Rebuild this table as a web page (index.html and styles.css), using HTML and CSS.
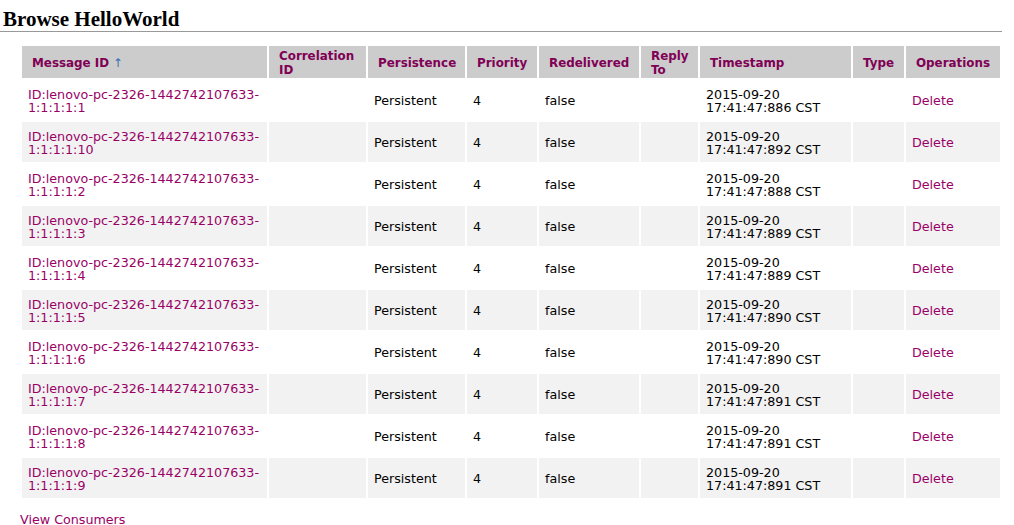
FILE: index.html
```html
<!DOCTYPE html>
<html>
<head>
<meta charset="utf-8">
<title>Browse HelloWorld</title>
<link rel="stylesheet" href="styles.css">
</head>
<body>
<div class="page">
  <h1 class="title">Browse HelloWorld</h1>
  <table class="messages">
    <thead>
      <tr>
        <th class="c-id">Message ID <span class="sort">↑</span></th>
        <th class="c-corr">Correlation ID</th>
        <th class="c-pers">Persistence</th>
        <th class="c-prio">Priority</th>
        <th class="c-redel">Redelivered</th>
        <th class="c-reply">Reply To</th>
        <th class="c-ts">Timestamp</th>
        <th class="c-type">Type</th>
        <th class="c-ops">Operations</th>
      </tr>
    </thead>
    <tbody>
      <tr><td><a href="#">ID:lenovo-pc-2326-1442742107633-1:1:1:1:1</a></td><td></td><td>Persistent</td><td>4</td><td>false</td><td></td><td>2015-09-20 17:41:47:886 CST</td><td></td><td><a href="#">Delete</a></td></tr>
      <tr><td><a href="#">ID:lenovo-pc-2326-1442742107633-1:1:1:1:10</a></td><td></td><td>Persistent</td><td>4</td><td>false</td><td></td><td>2015-09-20 17:41:47:892 CST</td><td></td><td><a href="#">Delete</a></td></tr>
      <tr><td><a href="#">ID:lenovo-pc-2326-1442742107633-1:1:1:1:2</a></td><td></td><td>Persistent</td><td>4</td><td>false</td><td></td><td>2015-09-20 17:41:47:888 CST</td><td></td><td><a href="#">Delete</a></td></tr>
      <tr><td><a href="#">ID:lenovo-pc-2326-1442742107633-1:1:1:1:3</a></td><td></td><td>Persistent</td><td>4</td><td>false</td><td></td><td>2015-09-20 17:41:47:889 CST</td><td></td><td><a href="#">Delete</a></td></tr>
      <tr><td><a href="#">ID:lenovo-pc-2326-1442742107633-1:1:1:1:4</a></td><td></td><td>Persistent</td><td>4</td><td>false</td><td></td><td>2015-09-20 17:41:47:889 CST</td><td></td><td><a href="#">Delete</a></td></tr>
      <tr><td><a href="#">ID:lenovo-pc-2326-1442742107633-1:1:1:1:5</a></td><td></td><td>Persistent</td><td>4</td><td>false</td><td></td><td>2015-09-20 17:41:47:890 CST</td><td></td><td><a href="#">Delete</a></td></tr>
      <tr><td><a href="#">ID:lenovo-pc-2326-1442742107633-1:1:1:1:6</a></td><td></td><td>Persistent</td><td>4</td><td>false</td><td></td><td>2015-09-20 17:41:47:890 CST</td><td></td><td><a href="#">Delete</a></td></tr>
      <tr><td><a href="#">ID:lenovo-pc-2326-1442742107633-1:1:1:1:7</a></td><td></td><td>Persistent</td><td>4</td><td>false</td><td></td><td>2015-09-20 17:41:47:891 CST</td><td></td><td><a href="#">Delete</a></td></tr>
      <tr><td><a href="#">ID:lenovo-pc-2326-1442742107633-1:1:1:1:8</a></td><td></td><td>Persistent</td><td>4</td><td>false</td><td></td><td>2015-09-20 17:41:47:891 CST</td><td></td><td><a href="#">Delete</a></td></tr>
      <tr><td><a href="#">ID:lenovo-pc-2326-1442742107633-1:1:1:1:9</a></td><td></td><td>Persistent</td><td>4</td><td>false</td><td></td><td>2015-09-20 17:41:47:891 CST</td><td></td><td><a href="#">Delete</a></td></tr>
    </tbody>
  </table>
  <div class="footer-links"><a href="#">View Consumers</a></div>
</div>
</body>
</html>
```
FILE: styles.css
```css
html, body {
  margin: 0;
  padding: 0;
  background: #ffffff;
}

.page {
  width: 1002px;
  font-family: "DejaVu Sans", Verdana, sans-serif;
  font-size: 12.7px;
  color: #000000;
}

a {
  color: #990066;
  text-decoration: none;
}

.title {
  margin: 0;
  padding: 7px 0 0 3px;
  font-family: "Liberation Serif", "Times New Roman", serif;
  font-size: 21px;
  font-weight: bold;
  line-height: normal;
  height: 24px;
  border-bottom: 1px solid #999999;
  color: #000000;
}

.messages {
  margin: 12px 0 0 20px;
  width: 982px;
  table-layout: fixed;
  border-collapse: separate;
  border-spacing: 2px;
}

.messages th {
  box-sizing: border-box;
  height: 32px;
  padding: 3px 4px 1px 10px;
  background: #cccccc;
  color: #800055;
  font-size: 11.9px;
  font-weight: bold;
  line-height: 14px;
  text-align: left;
  vertical-align: middle;
}

.sort {
  color: #3a72b0;
  font-weight: normal;
}

.c-id { width: 245px; }
.c-corr { width: 97px; }
.c-pers { width: 97px; }
.c-prio { width: 70px; }
.c-redel { width: 100px; }
.c-reply { width: 57px; }
.c-ts { width: 151px; }
.c-type { width: 51px; }
.c-ops { width: 94px; }

.messages td {
  box-sizing: border-box;
  height: 40px;
  padding: 2px 3px 0 6px;
  line-height: 13.5px;
  vertical-align: middle;
  text-align: left;
}

.messages tbody tr:nth-child(even) td {
  background: #f2f2f2;
}

.footer-links {
  margin-top: 12px;
  padding-left: 20px;
  line-height: 15px;
}
```
